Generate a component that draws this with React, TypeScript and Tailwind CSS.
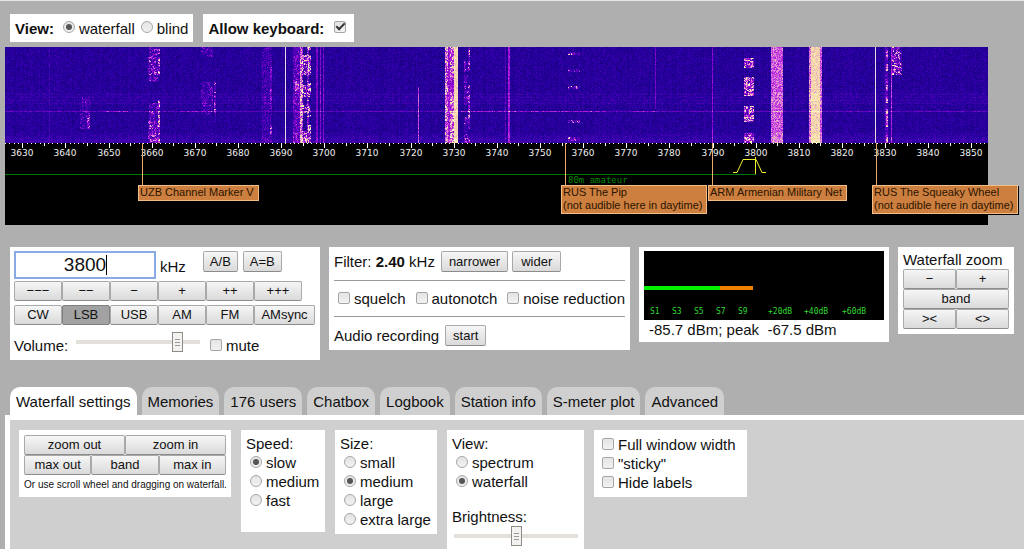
import React, { useEffect, useRef, useState } from 'react';
import clsx from 'clsx';

const START_KHZ = 3626;
const PX_PER_KHZ = 4.3145;
const BAND_WIDTH = 983;
const WATERFALL_HEIGHT = 96;

const freqToX = (khz: number) => (khz - START_KHZ) * PX_PER_KHZ;
const toPercent = (x: number) => `${(x / BAND_WIDTH) * 100}%`;

interface Signal {
  x: number;
  w: number;
  level: number;
  noise: number;
  bursts?: [number, number][];
}

const signals: Signal[] = [
  { x: 75, w: 10, level: 0.02, noise: 0.25, bursts: [[50, 82]] },
  { x: 82, w: 3, level: 0.1, noise: 0.5, bursts: [[68, 82]] },
  { x: 44, w: 1, level: 0.08, noise: 0.05 },
  { x: 143, w: 8, level: 0.02, noise: 0.4, bursts: [[10, 28], [74, 96]] },
  { x: 144, w: 9, level: 0.05, noise: 0.3, bursts: [[0, 35], [56, 96]] },
  { x: 153, w: 2, level: 0.2, noise: 0.75, bursts: [[2, 7], [10, 28], [53, 96]] },
  { x: 196, w: 12, level: 0.01, noise: 0.25, bursts: [[0, 10], [35, 68]] },
  { x: 209, w: 2, level: 0.08, noise: 0.45, bursts: [[34, 75]] },
  { x: 257, w: 10, level: 0.02, noise: 0.2 },
  { x: 265, w: 2, level: 0.05, noise: 0.35, bursts: [[14, 62], [78, 88]] },
  { x: 288, w: 9, level: 0.08, noise: 0.3 },
  { x: 290, w: 4, level: 0.2, noise: 0.35, bursts: [[34, 44]] },
  { x: 295, w: 3, level: 0.2, noise: 0.5 },
  { x: 297, w: 5, level: 0.1, noise: 0.85, bursts: [[8, 28], [38, 50], [58, 66], [84, 96]] },
  { x: 302, w: 2, level: 0.1, noise: 0.5 },
  { x: 303, w: 3, level: 0.2, noise: 0.85, bursts: [[0, 3], [8, 28], [36, 50], [58, 70], [78, 96]] },
  { x: 311, w: 2, level: 0.2, noise: 0.1 },
  { x: 315, w: 1, level: 0.22, noise: 0.15 },
  { x: 318, w: 1, level: 0.22, noise: 0.1 },
  { x: 413, w: 1, level: 0.4, noise: 0.1, bursts: [[40, 96]] },
  { x: 440, w: 9, level: 0.26, noise: 0.2 },
  { x: 440, w: 3, level: 0.02, noise: 0.5, bursts: [[0, 96]] },
  { x: 445, w: 4, level: 0.02, noise: 0.6, bursts: [[0, 30], [45, 96]] },
  { x: 449, w: 4, level: 0.66, noise: 0.1 },
  { x: 459, w: 4, level: 0.03, noise: 0.35, bursts: [[14, 25], [28, 58], [70, 96]] },
  { x: 463, w: 2, level: 0.1, noise: 0.5, bursts: [[0, 24], [38, 82], [88, 96]] },
  { x: 500, w: 1, level: 0.12, noise: 0.1 },
  { x: 503, w: 2, level: 0.28, noise: 0.1 },
  { x: 563, w: 12, level: 0.04, noise: 0.55, bursts: [[5, 8], [22, 25], [39, 42], [73, 76], [90, 94]] },
  { x: 650, w: 1, level: 0.18, noise: 0.1, bursts: [[0, 62]] },
  { x: 707, w: 1, level: 0.25, noise: 0.1 },
  { x: 739, w: 10, level: 0.25, noise: 0.75, bursts: [[11, 21], [30, 49], [59, 75], [86, 96]] },
  { x: 766, w: 12, level: 0.4, noise: 0.2 },
  { x: 804, w: 2, level: 0.4, noise: 0.3 },
  { x: 806, w: 9, level: 0.67, noise: 0.06 },
  { x: 815, w: 2, level: 0.4, noise: 0.2 },
  { x: 880, w: 3, level: 0.08, noise: 0.15 },
  { x: 881, w: 2, level: 0.22, noise: 0.4, bursts: [[3, 12], [17, 24], [32, 44], [50, 56], [62, 80], [88, 96]] },
  { x: 886, w: 1, level: 0.3, noise: 0.15 },
  { x: 887, w: 10, level: 0.1, noise: 0.65, bursts: [[0, 28]] },
];

// level, r, g, b
const palette = [
  [0, 20, 0, 108],
  [0.18, 40, 0, 165],
  [0.35, 105, 0, 195],
  [0.5, 175, 20, 220],
  [0.68, 222, 130, 222],
  [0.85, 245, 218, 165],
  [1, 253, 242, 195],
];

const levelToColor = (value: number) => {
  const v = Math.max(0, Math.min(1, value));
  let i = 1;
  while (palette[i][0] < v) i++;
  const a = palette[i - 1];
  const b = palette[i];
  const t = (v - a[0]) / (b[0] - a[0]);
  return [1, 2, 3].map((c) => a[c] + (b[c] - a[c]) * t);
};

const createRandom = (seed: number) => () => {
  seed = (seed * 1664525 + 1013904223) >>> 0;
  return seed / 4294967296;
};

const drawWaterfall = (canvas: HTMLCanvasElement) => {
  const ctx = canvas.getContext('2d');
  if (!ctx) return;
  const random = createRandom(80);
  const levels = new Float32Array(BAND_WIDTH * WATERFALL_HEIGHT);
  const columns = Array.from({ length: BAND_WIDTH }, () => random() * 0.04);

  for (let y = 0; y < WATERFALL_HEIGHT; y++) {
    let row = 0;
    if (y > 44 && y < 58) row = 0.03 * (y % 3);
    if (y > 84) row = (y - 84) * 0.008;
    for (let x = 0; x < BAND_WIDTH; x++) {
      let v = 0.05 + columns[x] + row + random() * 0.16;
      if (y === 64) {
        v += 0.12 + random() * 0.1;
        if ((x > 100 && x < 125) || (x > 175 && x < 210) || (x > 455 && x < 600) || (x > 625 && x < 650)) {
          v += random() * 0.25;
        }
      }
      levels[y * BAND_WIDTH + x] = v;
    }
  }

  signals.forEach((s) => {
    // keyed signals come in uneven clumps, carriers are steady
    const clumps = Array.from({ length: 400 }, () => (s.bursts && s.w > 1 ? 0.2 + random() * 1.3 : 1));
    (s.bursts || [[0, WATERFALL_HEIGHT]]).forEach(([top, bottom]) => {
      for (let y = top; y < bottom; y++) {
        for (let x = s.x; x < s.x + s.w; x++) {
          const n = random();
          const clump = clumps[(y >> 1) * 6 + ((x - s.x) >> 1)];
          levels[y * BAND_WIDTH + x] += (s.level + n * n * s.noise) * clump;
        }
      }
    });
  });

  const image = ctx.createImageData(BAND_WIDTH, WATERFALL_HEIGHT);
  levels.forEach((v, i) => {
    const [r, g, b] = levelToColor(v);
    image.data.set([r, g, b, 255], i * 4);
  });
  ctx.putImageData(image, 0, 0);

  // station carriers
  ctx.fillStyle = '#e8d8e0';
  ctx.fillRect(280, 0, 1, WATERFALL_HEIGHT);
  ctx.fillRect(870, 0, 1, WATERFALL_HEIGHT);
};

interface Station {
  left: number;
  marker: number;
  lines: string[];
}

const stations: Station[] = [
  { left: 133, marker: 137, lines: ['UZB Channel Marker V'] },
  { left: 556, marker: 560, lines: ['RUS The Pip', '(not audible here in daytime)'] },
  { left: 703, marker: 707, lines: ['ARM Armenian Military Net'] },
  { left: 867, marker: 871, lines: ['RUS The Squeaky Wheel', '(not audible here in daytime)'] },
];

const FrequencyScale: React.FC = () => {
  const ticks = Array.from({ length: 228 }, (_, i) => START_KHZ + i);
  return (
    <svg viewBox="0 0 983 82" className="block w-full h-auto bg-black" role="img" aria-label="Frequency scale">
      {ticks.map((f) => (
        <rect
          key={f}
          x={Math.round(freqToX(f))}
          y={0}
          width={1}
          height={f % 10 === 0 ? 5 : f % 5 === 0 ? 3 : 1}
          fill="#fff"
        />
      ))}
      {ticks.filter((f) => f % 10 === 0).map((f) => (
        <text key={f} x={Math.round(freqToX(f))} y={13} fontSize={9} textAnchor="middle" fill="#f0f0f0" fontFamily="'DejaVu Sans', sans-serif">
          {f}
        </text>
      ))}
      <rect x={0} y={31} width={751} height={1} fill="#007800" />
      <text x={563} y={40} fontSize={9} fill="#008800" fontFamily="'DejaVu Sans Mono', monospace">80m amateur</text>
      <path d="M728 29.5h4l6-13h13l6 13h4" fill="none" stroke="#f0f030" strokeWidth={1} />
      <rect x={750} y={14} width={1} height={17} fill="#f0f030" />
      {stations.map((s) => (
        <rect key={s.left} x={s.marker} y={0} width={1} height={42} fill="#e8ac70" />
      ))}
    </svg>
  );
};

const Waterfall: React.FC = () => {
  const canvasRef = useRef<HTMLCanvasElement>(null);

  useEffect(() => {
    if (canvasRef.current) drawWaterfall(canvasRef.current);
  }, []);

  return (
    <div className="relative ml-[5px] mr-9 mt-[5px]">
      <canvas ref={canvasRef} width={BAND_WIDTH} height={WATERFALL_HEIGHT} className="block w-full h-auto" />
      <FrequencyScale />
      {stations.map((s) => (
        <div
          key={s.left}
          style={{ left: toPercent(s.left) }}
          className="absolute top-[138px] border border-[#f0bc88] bg-[#cd7f3f] pb-px pl-px pr-1 text-[11px] leading-[13px] text-[#2a1400] whitespace-nowrap shadow-[1px_1px_0_#000]"
        >
          {s.lines.map((line) => <div key={line}>{line}</div>)}
        </div>
      ))}
    </div>
  );
};

interface ButtonProps {
  children: React.ReactNode;
  className?: string;
  active?: boolean;
}

const Button: React.FC<ButtonProps> = ({ children, className, active }) => (
  <button
    type="button"
    className={clsx(
      'rounded-[2px] border text-[13px] leading-[18px] text-center whitespace-nowrap',
      active
        ? 'border-[#808080] bg-[#a2a2a2]'
        : 'border-[#a9a9a9] border-b-[#8c8c8c] bg-linear-to-b from-[#f6f6f6] to-[#dadada]',
      className
    )}
  >
    {children}
  </button>
);

interface ChoiceProps {
  label: string;
  name?: string;
  defaultChecked?: boolean;
  className?: string;
}

const Radio: React.FC<ChoiceProps> = ({ label, name, defaultChecked, className }) => (
  <label className={clsx('flex items-center gap-1 whitespace-nowrap', className)}>
    <input
      type="radio"
      name={name}
      defaultChecked={defaultChecked}
      className="appearance-none shrink-0 size-3 mb-[2px] rounded-full border border-[#a6a6a6] bg-linear-to-b from-[#e4e4e4] to-[#f2f2f2] flex items-center justify-center checked:before:size-[6px] checked:before:rounded-full checked:before:bg-[#555] checked:before:content-['']"
    />
    {label}
  </label>
);

const checkboxClass =
  "appearance-none shrink-0 size-3 mb-[2px] rounded-[2px] border border-[#a6a6a6] bg-linear-to-b from-[#e4e4e4] to-[#f2f2f2] flex items-center justify-center checked:before:w-[9px] checked:before:h-[5px] checked:before:mb-[3px] checked:before:-rotate-45 checked:before:border-l-2 checked:before:border-b-2 checked:before:border-[#333] checked:before:content-['']";

const Checkbox: React.FC<ChoiceProps> = ({ label, className }) => (
  <label className={clsx('flex items-center gap-1 whitespace-nowrap', className)}>
    <input type="checkbox" className={checkboxClass} />
    {label}
  </label>
);

const Slider: React.FC<{ label: string; value: number; className?: string }> = ({ label, value, className }) => (
  <input
    type="range"
    aria-label={label}
    defaultValue={value}
    className={clsx(
      'appearance-none block w-[124px] h-5 bg-transparent',
      '[&::-webkit-slider-runnable-track]:h-1 [&::-webkit-slider-runnable-track]:bg-[#e3dfdb]',
      '[&::-webkit-slider-thumb]:appearance-none [&::-webkit-slider-thumb]:w-[11px] [&::-webkit-slider-thumb]:h-5 [&::-webkit-slider-thumb]:-mt-2',
      '[&::-webkit-slider-thumb]:border [&::-webkit-slider-thumb]:border-[#8f8b86] [&::-webkit-slider-thumb]:bg-[linear-gradient(#999,#999),linear-gradient(#999,#999),linear-gradient(#999,#999),linear-gradient(#f4f2ef,#f4f2ef)]',
      '[&::-webkit-slider-thumb]:bg-[length:5px_1px,5px_1px,5px_1px,100%_100%] [&::-webkit-slider-thumb]:bg-[position:2px_6px,2px_9px,2px_12px,0_0] [&::-webkit-slider-thumb]:bg-no-repeat',
      className
    )}
  />
);

const TuningPanel: React.FC = () => {
  const [frequency, setFrequency] = useState('3800');
  const [mode, setMode] = useState('LSB');

  return (
    <div className="w-[310px] bg-white px-1 pt-1">
      <div className="flex items-start">
        <div className="relative w-[142px]">
          <input
            id="frequency"
            type="text"
            value={frequency}
            onChange={(e) => setFrequency(e.target.value)}
            className="block w-full h-7 border-2 border-[#8aaae5] bg-white text-center text-[19px] outline-none"
          />
          <span className="absolute left-[92px] top-1 h-5 w-px bg-black" />
        </div>
        <label htmlFor="frequency" className="ml-1 mt-[6px]">kHz</label>
        <Button className="ml-[17px] px-[6px] h-[21px]">A/B</Button>
        <Button className="ml-[5px] px-[6px] h-[21px]">A=B</Button>
      </div>
      <div className="mt-[2px] flex">
        {['---', '--', '-', '+', '++', '+++'].map((step) => (
          <Button key={step} className="w-12">{step.replace(/-/g, '−')}</Button>
        ))}
      </div>
      <div className="mt-1 flex" onClick={(e) => {
        if (e.target instanceof HTMLButtonElement) setMode(e.target.innerText);
      }}>
        {['CW', 'LSB', 'USB', 'AM', 'FM', 'AMsync'].map((m) => (
          <Button key={m} active={m === mode} className={m === 'AMsync' ? 'w-[61px]' : 'w-12'}>{m}</Button>
        ))}
      </div>
      <div className="flex h-[35px] items-center">
        <span className="mt-[6px] w-[62px]">Volume:</span>
        <Slider label="Volume" value={85} className="mb-[2px]" />
        <Checkbox label="mute" className="ml-[10px] mt-[6px]" />
      </div>
    </div>
  );
};

const FilterPanel: React.FC = () => (
  <div className="w-[301px] bg-white px-[5px] py-1">
    <div className="flex items-center">
      <span>Filter: <b>2.40</b> kHz</span>
      <Button className="ml-[6px] h-[21px] px-[7px]">narrower</Button>
      <Button className="ml-1 h-[21px] px-2">wider</Button>
    </div>
    <hr className="mt-2 border-[#999]" />
    <div className="flex h-[35px] items-center justify-between pl-1">
      <Checkbox label="squelch" />
      <Checkbox label="autonotch" />
      <Checkbox label="noise reduction" />
    </div>
    <hr className="border-[#999]" />
    <div className="mt-2 flex items-center">
      <span>Audio recording</span>
      <Button className="ml-[6px] h-[21px] px-[7px]">start</Button>
    </div>
  </div>
);

const meterScale: [number, string][] = [
  [6, 'S1'], [28, 'S3'], [50, 'S5'], [72, 'S7'], [94, 'S9'], [124, '+20dB'], [160, '+40dB'], [198, '+60dB'],
];

const SignalMeter: React.FC = () => (
  <div className="w-[250px] bg-white px-[5px] pt-1 pb-[3px]">
    <svg viewBox="0 0 240 69" className="block w-full h-auto bg-black" role="img" aria-label="S-meter">
      <rect x={0} y={35} width={76} height={4} fill="#00f000" />
      <rect x={76} y={35} width={33} height={4} fill="#f08000" />
      {meterScale.map(([x, label]) => (
        <text key={label} x={x} y={63} fontSize={8} fill="#30d830" fontFamily="'DejaVu Sans Mono', monospace">{label}</text>
      ))}
    </svg>
    <div className="pl-[5px] whitespace-pre">-85.7 dBm; peak  -67.5 dBm</div>
  </div>
);

const ZoomPanel: React.FC = () => (
  <div className="w-[116px] bg-white px-[5px] pt-[3px] pb-[5px]">
    <div className="whitespace-nowrap">Waterfall zoom</div>
    <div className="grid grid-cols-2">
      <Button>−</Button>
      <Button>+</Button>
      <Button className="col-span-2">band</Button>
      <Button>&gt;&lt;</Button>
      <Button>&lt;&gt;</Button>
    </div>
  </div>
);

const tabs = ['Waterfall settings', 'Memories', '176 users', 'Chatbox', 'Logbook', 'Station info', 'S-meter plot', 'Advanced'];

const WaterfallSettings: React.FC = () => (
  <div className="flex items-start gap-[10px] border-l-[5px] border-t-[5px] border-white bg-[#cfcfcf] pl-[9px] pt-[10px]">
    <div className="w-[212px] bg-white px-[5px] pt-[5px] pb-[2px]">
      <div className="grid grid-cols-2">
        <Button>zoom out</Button>
        <Button>zoom in</Button>
      </div>
      <div className="grid grid-cols-3">
        <Button>max out</Button>
        <Button>band</Button>
        <Button>max in</Button>
      </div>
      <p className="text-[10px] leading-5 whitespace-nowrap">Or use scroll wheel and dragging on waterfall.</p>
    </div>

    <fieldset className="w-[84px] bg-white px-[5px] pt-1 pb-[22px]">
      <div>Speed:</div>
      <Radio name="speed" label="slow" defaultChecked className="ml-1" />
      <Radio name="speed" label="medium" className="ml-1" />
      <Radio name="speed" label="fast" className="ml-1" />
    </fieldset>

    <fieldset className="w-[102px] bg-white px-[5px] pt-1 pb-[5px]">
      <div>Size:</div>
      <Radio name="size" label="small" className="ml-1" />
      <Radio name="size" label="medium" defaultChecked className="ml-1" />
      <Radio name="size" label="large" className="ml-1" />
      <Radio name="size" label="extra large" className="ml-1" />
    </fieldset>

    <fieldset className="w-[137px] bg-white px-[5px] pt-1 pb-[3px]">
      <div>View:</div>
      <Radio name="display" label="spectrum" className="ml-1" />
      <Radio name="display" label="waterfall" defaultChecked className="ml-1" />
      <div className="mt-4">Brightness:</div>
      <Slider label="Brightness" value={50} className="ml-[2px]" />
    </fieldset>

    <div className="w-[153px] bg-white px-2 py-[5px]">
      <Checkbox label="Full window width" />
      <Checkbox label={'"sticky"'} />
      <Checkbox label="Hide labels" />
    </div>
  </div>
);

const App: React.FC = () => {
  const [activeTab, setActiveTab] = useState(tabs[0]);

  return (
    <div className="min-h-screen overflow-hidden bg-white font-['Liberation_Sans',Arial,sans-serif] text-[15px] leading-[19px] text-[#111]">
      <div className="border-t border-[#e4e4e4] bg-[#afafaf]">
        <div className="flex gap-[10px] pl-[10px] pt-[13px]">
          <div className="flex h-7 items-center bg-white px-[5px]">
            <b>View:</b>
            <Radio name="view" label="waterfall" defaultChecked className="ml-[9px]" />
            <Radio name="view" label="blind" className="ml-[6px]" />
          </div>
          <label className="flex h-7 items-center gap-[10px] bg-white pl-[5px] pr-2">
            <b>Allow keyboard:</b>
            <input type="checkbox" defaultChecked className={checkboxClass} />
          </label>
        </div>

        <Waterfall />

        <div className="mt-[22px] flex flex-wrap items-start gap-[9px] pl-[10px]">
          <TuningPanel />
          <FilterPanel />
          <SignalMeter />
          <ZoomPanel />
        </div>

        <div className="mt-[27px] pl-[5px]">
          <div className="flex gap-[5px] pl-[5px]" role="tablist">
            {tabs.map((tab) => (
              <button
                key={tab}
                type="button"
                role="tab"
                aria-selected={tab === activeTab}
                onClick={() => setActiveTab(tab)}
                className={clsx(
                  'h-7 rounded-t-[10px] px-[6px] whitespace-nowrap',
                  tab === activeTab ? 'bg-white' : 'bg-[#cfcfcf]'
                )}
              >
                {tab}
              </button>
            ))}
          </div>
          <WaterfallSettings />
        </div>
      </div>
    </div>
  );
};

export default App;
